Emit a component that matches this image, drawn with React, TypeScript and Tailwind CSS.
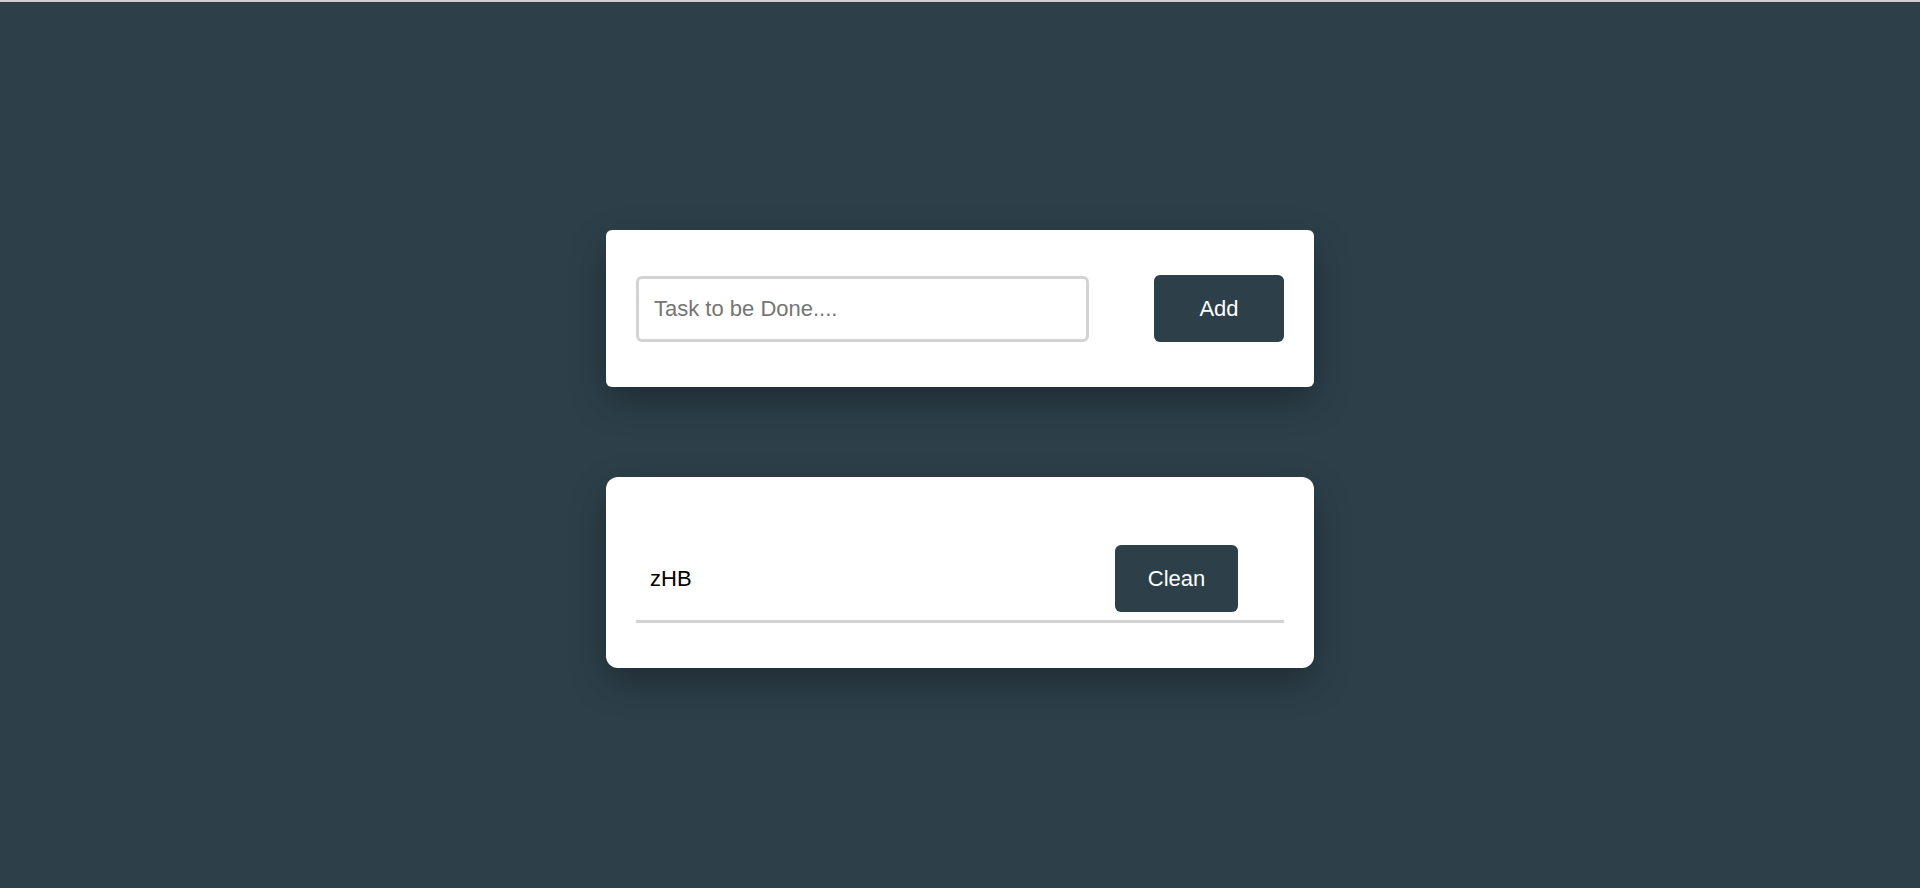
export default function App() {
  return (
    <div
      className="min-h-[888px] w-full bg-[#2d404a] border-t-2 border-[#d0d0d0] flex flex-col items-center"
      style={{ fontFamily: '"Liberation Sans", Arial, sans-serif' }}
    >
      <div className="mt-[228px] w-[708px] bg-white rounded-[6px] shadow-[0_14px_36px_rgba(0,0,0,0.32)] px-[30px] py-[45px] flex items-center justify-between">
        <input
          type="text"
          placeholder="Task to be Done...."
          className="w-[453px] h-[66px] border-[3px] border-[#d3d3d3] rounded-[6px] px-[15px] text-[22px] text-black placeholder:text-[#757575] outline-none"
        />
        <button className="w-[130px] h-[67px] bg-[#2d404a] text-white text-[22px] rounded-[6px]">
          Add
        </button>
      </div>
      <div className="mt-[90px] w-[708px] bg-white rounded-[12px] shadow-[0_14px_36px_rgba(0,0,0,0.32)] px-[30px] pt-[68px] pb-[45px]">
        <ul>
          <li className="flex items-center justify-between pl-[14px] pr-[46px] pb-[8px] border-b-[3px] border-[#d3d3d3]">
            <span className="text-[22px] text-black">zHB</span>
            <button className="w-[123px] h-[67px] bg-[#2d404a] text-white text-[22px] rounded-[6px]">
              Clean
            </button>
          </li>
        </ul>
      </div>
    </div>
  );
}
